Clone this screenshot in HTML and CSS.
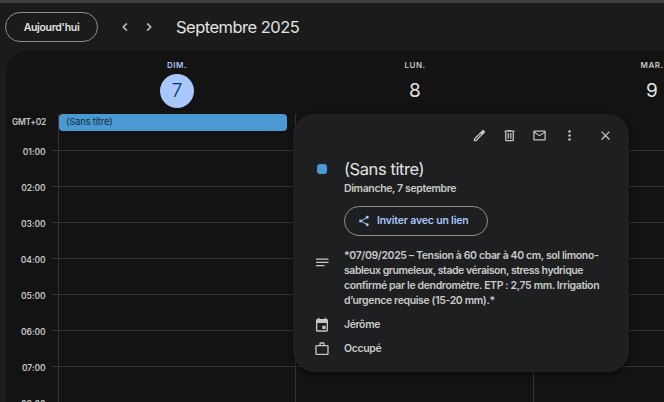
FILE: index.html
```html
<!DOCTYPE html>
<html lang="fr">
<head>
<meta charset="utf-8">
<title>Agenda</title>
<link rel="stylesheet" href="styles.css">
</head>
<body>
<header class="topbar">
  <button class="today"><span>Aujourd'hui</span></button>
  <svg class="chev prev" viewBox="0 0 24 24"><path d="M15.4 7.4 14 6l-6 6 6 6 1.4-1.4L10.8 12z"/></svg>
  <svg class="chev" viewBox="0 0 24 24"><path d="M10 6 8.6 7.4l4.6 4.6-4.6 4.6L10 18l6-6z"/></svg>
  <h1 class="month">Septembre 2025</h1>
</header>
<main class="calendar">
  <div class="days">
    <div class="day current"><span class="dow">DIM.</span><span class="num">7</span></div>
    <div class="day"><span class="dow">LUN.</span><span class="num">8</span></div>
    <div class="day last"><span class="dow">MAR.</span><span class="num">9</span></div>
  </div>
  <div class="allday">
    <span class="zone">GMT+02</span>
    <div class="cell"><div class="event">(Sans titre)</div></div>
    <div class="cell"></div>
    <div class="cell"></div>
  </div>
  <div class="hour first"><span class="time">01:00</span><i class="tick"></i><div class="cell"></div><div class="cell"></div><div class="cell"></div></div>
  <div class="hour"><span class="time">02:00</span><i class="tick"></i><div class="cell"></div><div class="cell"></div><div class="cell"></div></div>
  <div class="hour"><span class="time">03:00</span><i class="tick"></i><div class="cell"></div><div class="cell"></div><div class="cell"></div></div>
  <div class="hour"><span class="time">04:00</span><i class="tick"></i><div class="cell"></div><div class="cell"></div><div class="cell"></div></div>
  <div class="hour"><span class="time">05:00</span><i class="tick"></i><div class="cell"></div><div class="cell"></div><div class="cell"></div></div>
  <div class="hour"><span class="time">06:00</span><i class="tick"></i><div class="cell"></div><div class="cell"></div><div class="cell"></div></div>
  <div class="hour"><span class="time">07:00</span><i class="tick"></i><div class="cell"></div><div class="cell"></div><div class="cell"></div></div>
  <div class="hour"><span class="time">08:00</span><i class="tick"></i><div class="cell"></div><div class="cell"></div><div class="cell"></div></div>
</main>
<section class="popup">
  <div class="actions">
    <svg viewBox="0 0 24 24"><path d="M3 17.2V21h3.8L19.3 8.5l-3.8-3.8zM5.9 19H5v-.9l9.1-9.1.9.9zM20.7 5.6 18.4 3.3a1.2 1.2 0 0 0-1.7 0l-1.8 1.8 3.9 3.9 1.9-1.9a1.1 1.1 0 0 0 0-1.5z"/></svg>
    <svg viewBox="0 0 24 24"><path d="M15 4V3H9v1H4v2h1v13c0 1.1.9 2 2 2h10a2 2 0 0 0 2-2V6h1V4zm2 15H7V6h10zM9 8h2v9H9zm4 0h2v9h-2z"/></svg>
    <svg viewBox="0 0 24 24"><path d="M20 4H4a2 2 0 0 0-2 2v12c0 1.1.9 2 2 2h16a2 2 0 0 0 2-2V6a2 2 0 0 0-2-2zm0 2-8 5-8-5zm0 12H4V8l8 5 8-5z"/></svg>
    <svg viewBox="0 0 24 24"><circle cx="12" cy="5.5" r="2"/><circle cx="12" cy="12" r="2"/><circle cx="12" cy="18.5" r="2"/></svg>
    <svg class="close" viewBox="0 0 24 24"><path d="M19 6.4 17.6 5 12 10.6 6.4 5 5 6.4l5.6 5.6L5 17.6 6.4 19l5.6-5.6 5.6 5.6 1.4-1.4-5.6-5.6z"/></svg>
  </div>
  <div class="row heading">
    <div class="lead"><span class="swatch"></span></div>
    <div>
      <h2>(Sans titre)</h2>
      <p class="date">Dimanche, 7 septembre</p>
      <button class="invite">
        <svg viewBox="0 0 24 24"><path d="M18 5 6 12l12 7" fill="none" stroke="currentColor" stroke-width="2"/><circle cx="18.5" cy="4.5" r="2.8"/><circle cx="5" cy="12" r="2.8"/><circle cx="18.5" cy="19.5" r="2.8"/></svg>
        <span>Inviter avec un lien</span>
      </button>
    </div>
  </div>
  <div class="row note">
    <div class="lead"><svg viewBox="0 0 16 16"><path d="M2 4.500h12.500v1.300h-12.500zm0 3.200h12.500v1.300h-12.500zm0 3.300h8.500v1.300h-8.500z"/></svg></div>
    <p><span>*07/09/2025 – Tension à 60 cbar à 40 cm, sol limono-</span><br><span class="l2">sableux grumeleux, stade véraison, stress hydrique</span><br><span>confirmé par le dendromètre. ETP : 2,75 mm. Irrigation</span><br><span>d’urgence requise (15-20 mm).*</span></p>
  </div>
  <div class="row line">
    <div class="lead"><svg viewBox="0 0 24 24"><path d="M19 3h-1V1h-2v2H8V1H6v2H5a2 2 0 0 0-2 2v15c0 1.1.9 2 2 2h14a2 2 0 0 0 2-2V5a2 2 0 0 0-2-2zm0 17H5V9h14zM12.500 13h5v5h-5z"/></svg></div>
    <p>Jérôme</p>
  </div>
  <div class="row line">
    <div class="lead"><svg viewBox="0 0 24 24"><path d="M20 6h-4V4a2 2 0 0 0-2-2h-4a2 2 0 0 0-2 2v2H4a2 2 0 0 0-2 2v11c0 1.1.9 2 2 2h16a2 2 0 0 0 2-2V8a2 2 0 0 0-2-2zM10 4h4v2h-4zm10 15H4V8h16z"/></svg></div>
    <p>Occupé</p>
  </div>
</section>
</body>
</html>
```
FILE: styles.css
```css
* { box-sizing: border-box; margin: 0; padding: 0; }
body {
  width: 664px; height: 402px; overflow: hidden; position: relative;
  background: #1b1b1b; color: #e3e3e3;
  font-family: Inter, "Liberation Sans", sans-serif;
  border-top: 3px solid #414141;
}
button { font: inherit; background: none; }
svg { display: block; fill: currentColor; }
.topbar { height: 48px; display: flex; align-items: center; padding-left: 5px; }
.today {
  width: 93px; height: 30px; border: 1px solid #8e918f; border-radius: 15px;
  color: #e3e3e3; font-size: 10.5px; font-weight: 600; letter-spacing: -.32px; white-space: nowrap;
}
.chev { width: 16px; height: 16px; color: #c4c7c5; margin-left: 8px; stroke: currentColor; stroke-width: .4; }
.chev.prev { margin-left: 19px; }
.month { margin-left: 19px; font-size: 16.5px; font-weight: 400; letter-spacing: -.52px; white-space: nowrap; }
.calendar { margin-left: 6px; width: 658px; height: 351px; background: #131313; border-top-left-radius: 21px; overflow: hidden; }
.days { height: 63px; display: grid; grid-template-columns: 238px 238px 238px; padding-left: 52px; }
.day { display: flex; flex-direction: column; align-items: center; padding-top: 9px; }
.dow { font-size: 8px; line-height: 10px; font-weight: 600; letter-spacing: .5px; color: #c4c7c5; }
.num { width: 34px; height: 34px; margin-top: 4px; line-height: 34px; text-align: center; border-radius: 50%; font-size: 19px; }
.current .dow { color: #a8c7fa; }
.current .num { background: #a8c7fa; color: #062e6f; font-weight: 300; }
.day.last { padding-right: 2px; }
.allday { height: 18px; display: grid; grid-template-columns: 52px 237px 238px 238px; }
.zone { font-size: 8.5px; line-height: 17px; font-weight: 600; letter-spacing: -.34px; padding-left: 6px; color: #c4c7c5; white-space: nowrap; }
.cell { border-left: 1px solid #333535; }
.event { width: 228px; height: 17px; border-radius: 4px; background: #4b99d2; color: #132b3d; font-size: 9.5px; line-height: 16px; padding-left: 7px; letter-spacing: -.22px; }
.hour { height: 36px; display: grid; grid-template-columns: 46px 6px 237px 238px 238px; }
.hour.first { height: 19px; box-shadow: inset 0 1px #0e0e0e; }
.hour .cell, .tick { border-bottom: 1px solid #333535; }
.time { align-self: end; height: 10px; line-height: 10px; transform: translateY(6px); text-align: right; padding-right: 6.5px; font-size: 8.5px; font-weight: 600; letter-spacing: -.1px; color: #c4c7c5; }
.popup {
  position: absolute; left: 293px; top: 111px; width: 336px; height: 258px;
  border-radius: 21px; background: #1e1f20; padding-top: 14px;
  box-shadow: 0 2px 5px rgba(0,0,0,.55);
}
.actions { display: flex; justify-content: flex-end; gap: 15px; padding-right: 16px; color: #c4c7c5; }
.actions svg { width: 15px; height: 15px; }
.actions .close { margin-left: 6px; }
.row { display: grid; grid-template-columns: 51px 1fr; white-space: nowrap; }
.lead { padding-left: 21px; color: #c4c7c5; }
.lead svg { width: 16px; height: 16px; }
.heading { margin-top: 15px; }
.swatch { display: block; width: 10px; height: 10px; border-radius: 3px; background: #4b99d2; margin: 6px 0 0 3px; }
h2 { font-size: 16.5px; line-height: 22px; font-weight: 400; letter-spacing: -.42px; }
p { font-size: 10.5px; line-height: 15px; font-weight: 600; letter-spacing: -.37px; color: #c8cac8; }
.l2 { letter-spacing: -.45px; }
.date { margin-top: 1px; }
.invite {
  margin-top: 10px; width: 144px; height: 30px; border: 1px solid #8e918f; border-radius: 15px;
  display: flex; align-items: center; padding: 0 0 1px 13px; gap: 7px; color: #a8c7fa;
  font-size: 10.5px; font-weight: 600; letter-spacing: -.18px;
}
.invite svg { width: 12px; height: 12px; }
.note { margin-top: 12px; }
.note .lead { padding-top: 6px; }
.line { margin-top: 9px; }
.line + .line { margin-top: 8px; }
```
